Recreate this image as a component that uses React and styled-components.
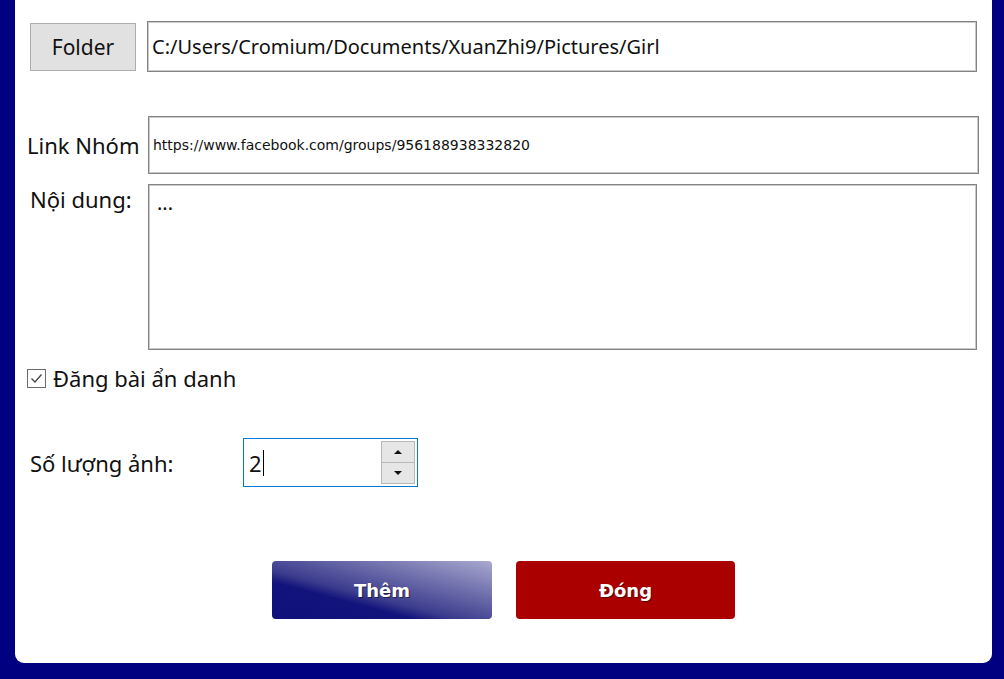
import React from 'react';
import styled, { createGlobalStyle } from 'styled-components';

const GlobalStyle = createGlobalStyle`
  html, body {
    margin: 0;
    padding: 0;
    background: #000080;
  }
  * {
    box-sizing: border-box;
  }
`;

const Screen = styled.div`
  width: 1004px;
  height: 679px;
  background: #000080;
  padding-left: 15px;
  overflow: hidden;
`;

const Panel = styled.div`
  width: 977px;
  height: 663px;
  background: #ffffff;
  border-radius: 0 0 9px 9px;
  padding: 21px 0 0 12px;
  font-family: 'Noto Sans', 'Open Sans', sans-serif;
  color: #111;
`;

const Row = styled.div`
  display: flex;
  align-items: ${props => props.align || 'center'};
  margin-top: ${props => props.mt || 0}px;
`;

const FolderButton = styled.button`
  width: 106px;
  height: 48px;
  margin-left: 3px;
  background: #e1e1e1;
  border: 1px solid #adadad;
  font-family: inherit;
  font-size: 21px;
  color: #111;
  padding: 0;
  cursor: pointer;
`;

const Label = styled.div`
  width: ${props => props.w}px;
  padding-left: ${props => props.pl || 0}px;
  padding-top: ${props => props.pt || 0}px;
  font-size: 22px;
  line-height: 1;
  flex-shrink: 0;
`;

const Field = styled.div`
  width: ${props => props.w}px;
  height: ${props => props.h}px;
  margin-left: ${props => props.ml || 0}px;
  border: 1px solid #828282;
  box-shadow: inset 0 0 0 1px #c9c9c9;
  display: flex;
  align-items: center;
  padding-left: 4px;
  font-size: ${props => props.fs || 20}px;
  font-family: ${props => (props.small ? "'DejaVu Sans', sans-serif" : 'inherit')};
  white-space: nowrap;
`;

const TextArea = styled.div`
  width: 829px;
  height: 166px;
  border: 1px solid #828282;
  box-shadow: inset 0 0 0 1px #c9c9c9;
  padding: 8px 8px;
  font-size: 20px;
  line-height: 1;
`;

const CheckRow = styled.label`
  display: flex;
  align-items: center;
  gap: 7px;
  margin-top: 17px;
  font-size: 22px;
  line-height: 1;
`;

const Box = styled.span`
  width: 19px;
  height: 19px;
  border: 1px solid #6a6a6a;
  display: flex;
  align-items: center;
  justify-content: center;
`;

const Spin = styled.div`
  width: 175px;
  height: 49px;
  border: 1px solid #0078d7;
  display: flex;
  align-items: center;
  justify-content: space-between;
  padding: 2px 2px 2px 5px;
`;

const SpinValue = styled.div`
  font-size: 22px;
  display: flex;
  align-items: center;
`;

const Caret = styled.span`
  width: 1px;
  height: 26px;
  background: #000;
  margin-left: 1px;
`;

const SpinButtons = styled.div`
  width: 34px;
  height: 100%;
  display: flex;
  flex-direction: column;
`;

const SpinBtn = styled.div`
  flex: 1;
  background: #e6e6e6;
  border: 1px solid #b8b8b8;
  border-top-width: ${props => (props.down ? 0 : 1)}px;
  display: flex;
  align-items: center;
  justify-content: center;
`;

const Arrow = styled.span`
  width: 0;
  height: 0;
  border-left: 4px solid transparent;
  border-right: 4px solid transparent;
  ${props => (props.down ? 'border-top: 4px solid #111;' : 'border-bottom: 4px solid #111;')}
`;

const Actions = styled.div`
  display: flex;
  gap: 24px;
  margin-top: 74px;
  padding-left: 245px;
`;

const ActionButton = styled.button`
  width: ${props => props.w}px;
  height: 58px;
  border: none;
  border-radius: 4px;
  background: ${props => props.bg};
  color: #fff;
  font-family: 'DejaVu Sans', sans-serif;
  font-weight: bold;
  font-size: 18px;
  text-shadow: 1px 1px 1px rgba(0, 0, 0, 0.55);
  cursor: pointer;
`;

export default function App() {
  return (
    <Screen>
      <GlobalStyle />
      <Panel>
        <Row>
          <FolderButton>Folder</FolderButton>
          <Field w={830} h={51} ml={11}>C:/Users/Cromium/Documents/XuanZhi9/Pictures/Girl</Field>
        </Row>

        <Row mt={44}>
          <Label w={121}>Link Nhóm</Label>
          <Field w={831} h={58} fs={14} small>https://www.facebook.com/groups/956188938332820</Field>
        </Row>

        <Row mt={10} align="flex-start">
          <Label w={121} pl={3} pt={4}>Nội dung:</Label>
          <TextArea>...</TextArea>
        </Row>

        <CheckRow>
          <Box>
            <svg width="15" height="15" viewBox="0 0 15 15">
              <path d="M2.5 7.5 L6 11 L12.5 3.5" fill="none" stroke="#444" strokeWidth="1.3" />
            </svg>
          </Box>
          Đăng bài ẩn danh
        </CheckRow>

        <Row mt={49}>
          <Label w={216} pl={3}>Số lượng ảnh:</Label>
          <Spin>
            <SpinValue>
              2<Caret />
            </SpinValue>
            <SpinButtons>
              <SpinBtn>
                <Arrow />
              </SpinBtn>
              <SpinBtn down>
                <Arrow down />
              </SpinBtn>
            </SpinButtons>
          </Spin>
        </Row>

        <Actions>
          <ActionButton
            w={220}
            bg="linear-gradient(to top right, #10107a 0%, #13137c 32%, #3c3c8e 42%, #a9a9cf 100%)"
          >
            Thêm
          </ActionButton>
          <ActionButton w={219} bg="#ab0000">
            Đóng
          </ActionButton>
        </Actions>
      </Panel>
    </Screen>
  );
}
